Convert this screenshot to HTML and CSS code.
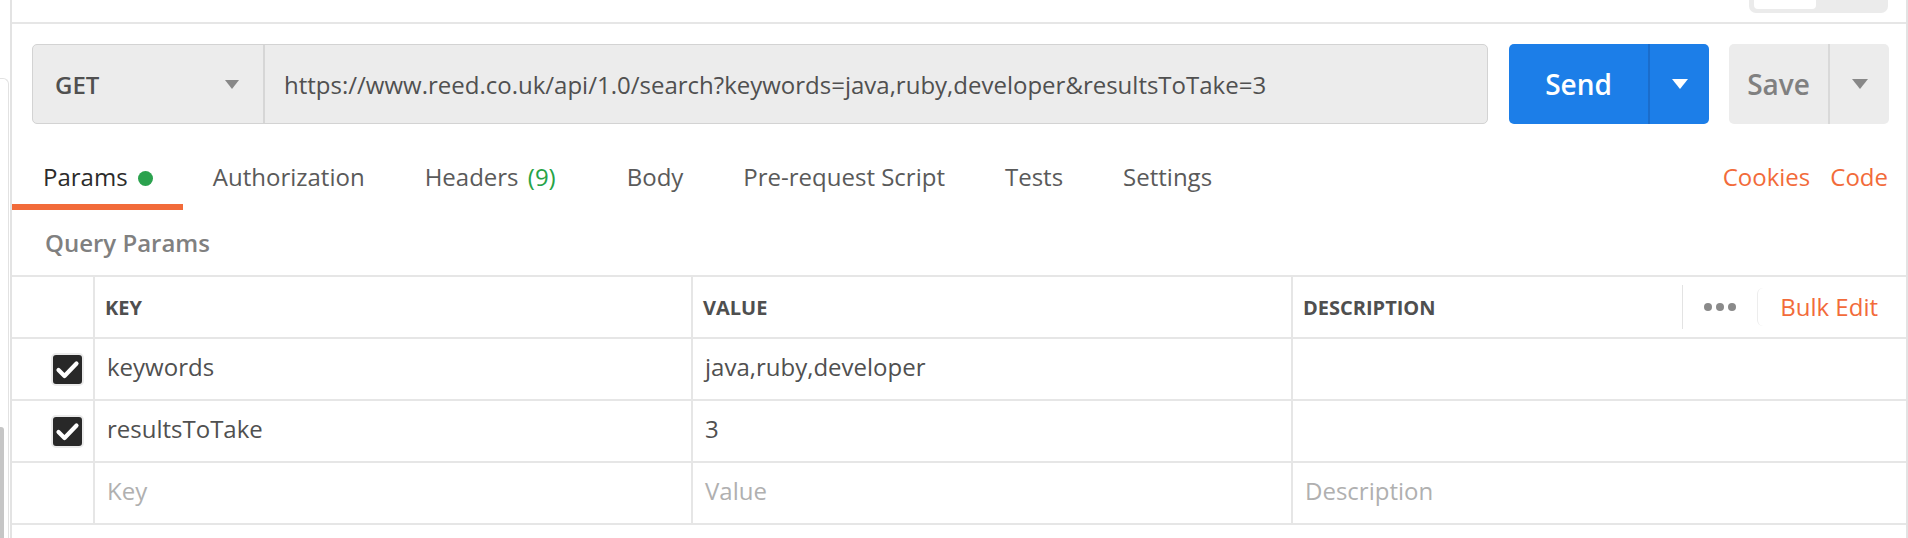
FILE: index.html
```html
<!DOCTYPE html>
<html lang="en">
<head>
    <meta charset="UTF-8">
    <meta name="viewport" content="width=device-width, initial-scale=1.0">
    <title>Postman - Query Params</title>
    <link rel="stylesheet" href="styles.css">
</head>
<body>
    <!-- left sidebar edge -->
    <div class="side-edge">
        <div class="side-box">
            <div class="side-thumb"></div>
        </div>
    </div>

    <div class="panel">
        <div class="topbar">
            <div class="toggle"><span class="toggle-on"></span></div>
        </div>

        <!-- request line -->
        <div class="request-row">
            <div class="url-box">
                <div class="method">
                    <span>GET</span>
                    <span class="caret caret-grey"></span>
                </div>
                <div class="url">https://www.reed.co.uk/api/1.0/search?keywords=java,ruby,developer&amp;resultsToTake=3</div>
            </div>
            <div class="btn btn-send">
                <span class="btn-main">Send</span>
                <span class="btn-arrow"><span class="caret caret-white"></span></span>
            </div>
            <div class="btn btn-save">
                <span class="btn-main">Save</span>
                <span class="btn-arrow"><span class="caret caret-grey"></span></span>
            </div>
        </div>

        <!-- tabs -->
        <div class="tabs-row">
            <div class="tabs">
                <div class="tab active">Params <span class="dot"></span></div>
                <div class="tab">Authorization</div>
                <div class="tab tab-headers">Headers <span class="count">(9)</span></div>
                <div class="tab">Body</div>
                <div class="tab">Pre-request Script</div>
                <div class="tab">Tests</div>
                <div class="tab">Settings</div>
            </div>
            <div class="links">
                <span>Cookies</span>
                <span>Code</span>
            </div>
        </div>

        <div class="section-title">Query Params</div>

        <div class="params">
            <div class="row head">
                <div class="cell"></div>
                <div class="cell">KEY</div>
                <div class="cell">VALUE</div>
                <div class="cell desc-head">
                    <span>DESCRIPTION</span>
                    <div class="actions">
                        <span class="sep"></span>
                        <span class="dots"><i></i><i></i><i></i></span>
                        <span class="bulk">Bulk Edit</span>
                    </div>
                </div>
            </div>
            <div class="row">
                <div class="cell check-cell">
                    <span class="check">
                        <svg width="29" height="29" viewBox="0 0 29 29"><path d="M5.5 15 L11.5 21 L23.5 8.5" fill="none" stroke="#fff" stroke-width="4.2" stroke-linecap="round" stroke-linejoin="round"/></svg>
                    </span>
                </div>
                <div class="cell">keywords</div>
                <div class="cell">java,ruby,developer</div>
                <div class="cell"></div>
            </div>
            <div class="row">
                <div class="cell check-cell">
                    <span class="check">
                        <svg width="29" height="29" viewBox="0 0 29 29"><path d="M5.5 15 L11.5 21 L23.5 8.5" fill="none" stroke="#fff" stroke-width="4.2" stroke-linecap="round" stroke-linejoin="round"/></svg>
                    </span>
                </div>
                <div class="cell">resultsToTake</div>
                <div class="cell">3</div>
                <div class="cell"></div>
            </div>
            <div class="row placeholder">
                <div class="cell"></div>
                <div class="cell">Key</div>
                <div class="cell">Value</div>
                <div class="cell">Description</div>
            </div>
        </div>
    </div>
</body>
</html>
```

FILE: styles.css
```css
body {
    margin: 0;
    height: 538px;
    display: flex;
    overflow: hidden;
    background: #fff;
    color: #505050;
    font-family: "Open Sans", "Liberation Sans", sans-serif;
    font-size: 24px;
}

/* left edge of the sidebar */
.side-edge {
    width: 10px;
}

.side-box {
    margin-top: 78px;
    width: 8px;
    height: 460px;
    border-top: 1px solid #e2e2e2;
    border-right: 1px solid #e2e2e2;
    border-top-right-radius: 6px;
}

.side-thumb {
    margin-top: 348px;
    width: 4px;
    height: 120px;
    background: #c6c6c6;
    border-radius: 0 3px 0 0;
}

.panel {
    flex: 1;
    border-left: 2px solid #e3e3e3;
    border-right: 2px solid #e3e3e3;
}

.topbar {
    height: 22px;
    border-bottom: 2px solid #e6e6e6;
    display: flex;
    justify-content: flex-end;
    padding-right: 18px;
}

.toggle {
    width: 134px;
    height: 13px;
    padding-left: 5px;
    background: #ebebeb;
    border-radius: 0 0 7px 7px;
}

.toggle-on {
    display: block;
    width: 62px;
    height: 9px;
    background: #fff;
    border-radius: 0 0 4px 4px;
}

/* request line */
.request-row {
    display: flex;
    height: 80px;
    margin-top: 20px;
    padding: 0 17px 0 20px;
}

.url-box {
    flex: 1;
    display: flex;
    background: #ececec;
    border: 1px solid #d3d3d3;
    border-radius: 5px;
}

.method {
    width: 184px;
    padding: 0 24px 0 22px;
    display: flex;
    align-items: center;
    justify-content: space-between;
    border-right: 2px solid #d6d6d6;
    font-weight: 600;
}

.url {
    display: flex;
    align-items: center;
    padding-left: 19px;
    white-space: nowrap;
}

.caret {
    width: 0;
    height: 0;
    border-left: 8px solid transparent;
    border-right: 8px solid transparent;
}

.caret-grey {
    border-top: 10px solid #888;
}

.caret-white {
    border-top: 10px solid #fff;
}

.method .caret {
    border-left-width: 7px;
    border-right-width: 7px;
    border-top-width: 9px;
}

.btn {
    display: flex;
    border-radius: 5px;
    font-size: 28px;
    font-weight: 600;
}

.btn-main {
    display: flex;
    align-items: center;
    justify-content: center;
}

.btn-arrow {
    width: 59px;
    display: flex;
    align-items: center;
    justify-content: center;
}

.btn-send {
    margin-left: 21px;
    background: #1c7ee8;
    color: #fff;
}

.btn-send .btn-main {
    width: 139px;
}

.btn-send .btn-arrow {
    border-left: 2px solid #1a6dcc;
}

.btn-save {
    margin-left: 20px;
    background: #ececec;
    color: #808080;
}

.btn-save .btn-main {
    width: 99px;
}

.btn-save .btn-arrow {
    border-left: 2px solid #d9d9d9;
}

/* tabs */
.tabs-row {
    display: flex;
    justify-content: space-between;
    margin-top: 26px;
}

.tabs {
    display: flex;
}

.tab {
    height: 54px;
    line-height: 54px;
    padding: 0 30px;
    border-bottom: 6px solid transparent;
    color: #5a5a5a;
    white-space: nowrap;
}

.tab.active {
    padding-left: 31px;
    color: #2b2b2b;
    border-bottom-color: #f26b3a;
}

.tab-headers {
    padding-right: 41px;
}

.dot {
    display: inline-block;
    width: 15px;
    height: 15px;
    margin-left: 4px;
    border-radius: 50%;
    background: #2ba24e;
}

.count {
    margin-left: 3px;
    color: #26a347;
}

.links {
    display: flex;
    gap: 20px;
    padding-right: 18px;
    height: 54px;
    line-height: 54px;
    color: #f26b3a;
}

.section-title {
    height: 65px;
    line-height: 65px;
    padding-left: 33px;
    font-weight: 600;
    color: #808080;
}

/* params table */
.params {
    border-top: 2px solid #e6e6e6;
}

.row {
    display: grid;
    grid-template-columns: 81px 598px 600px 1fr;
    height: 60px;
    border-bottom: 2px solid #e6e6e6;
}

.cell {
    display: flex;
    align-items: center;
    padding: 0 0 6px 12px;
    border-left: 2px solid #e6e6e6;
    white-space: nowrap;
}

.cell:first-child {
    border-left: none;
    padding-left: 0;
}

.head .cell {
    padding: 0 0 0 10px;
    font-size: 20px;
    font-weight: 700;
    color: #4f4f4f;
}

.head .cell:first-child {
    padding-left: 0;
}

.desc-head {
    justify-content: space-between;
}

.actions {
    display: flex;
    align-items: center;
    height: 100%;
}

.sep {
    width: 1px;
    height: 44px;
    background: #e3e3e3;
}

.dots {
    display: flex;
    gap: 4px;
    margin: 0 21px;
}

.dots i {
    width: 8px;
    height: 8px;
    border-radius: 50%;
    background: #8a8a8a;
}

.head .bulk {
    height: 38px;
    line-height: 38px;
    padding: 0 28px 0 22px;
    border-left: 1px solid #ededed;
    border-radius: 6px 0 0 6px;
    font-size: 24px;
    font-weight: 400;
    color: #f26b3a;
}

.check-cell {
    justify-content: flex-end;
    padding: 0 9px 0 0;
}

.check {
    display: flex;
    width: 29px;
    height: 29px;
    border: 2px solid #ebebeb;
    border-radius: 5px;
    background: #282828;
}

.placeholder .cell {
    color: #b0b0b0;
}
```
